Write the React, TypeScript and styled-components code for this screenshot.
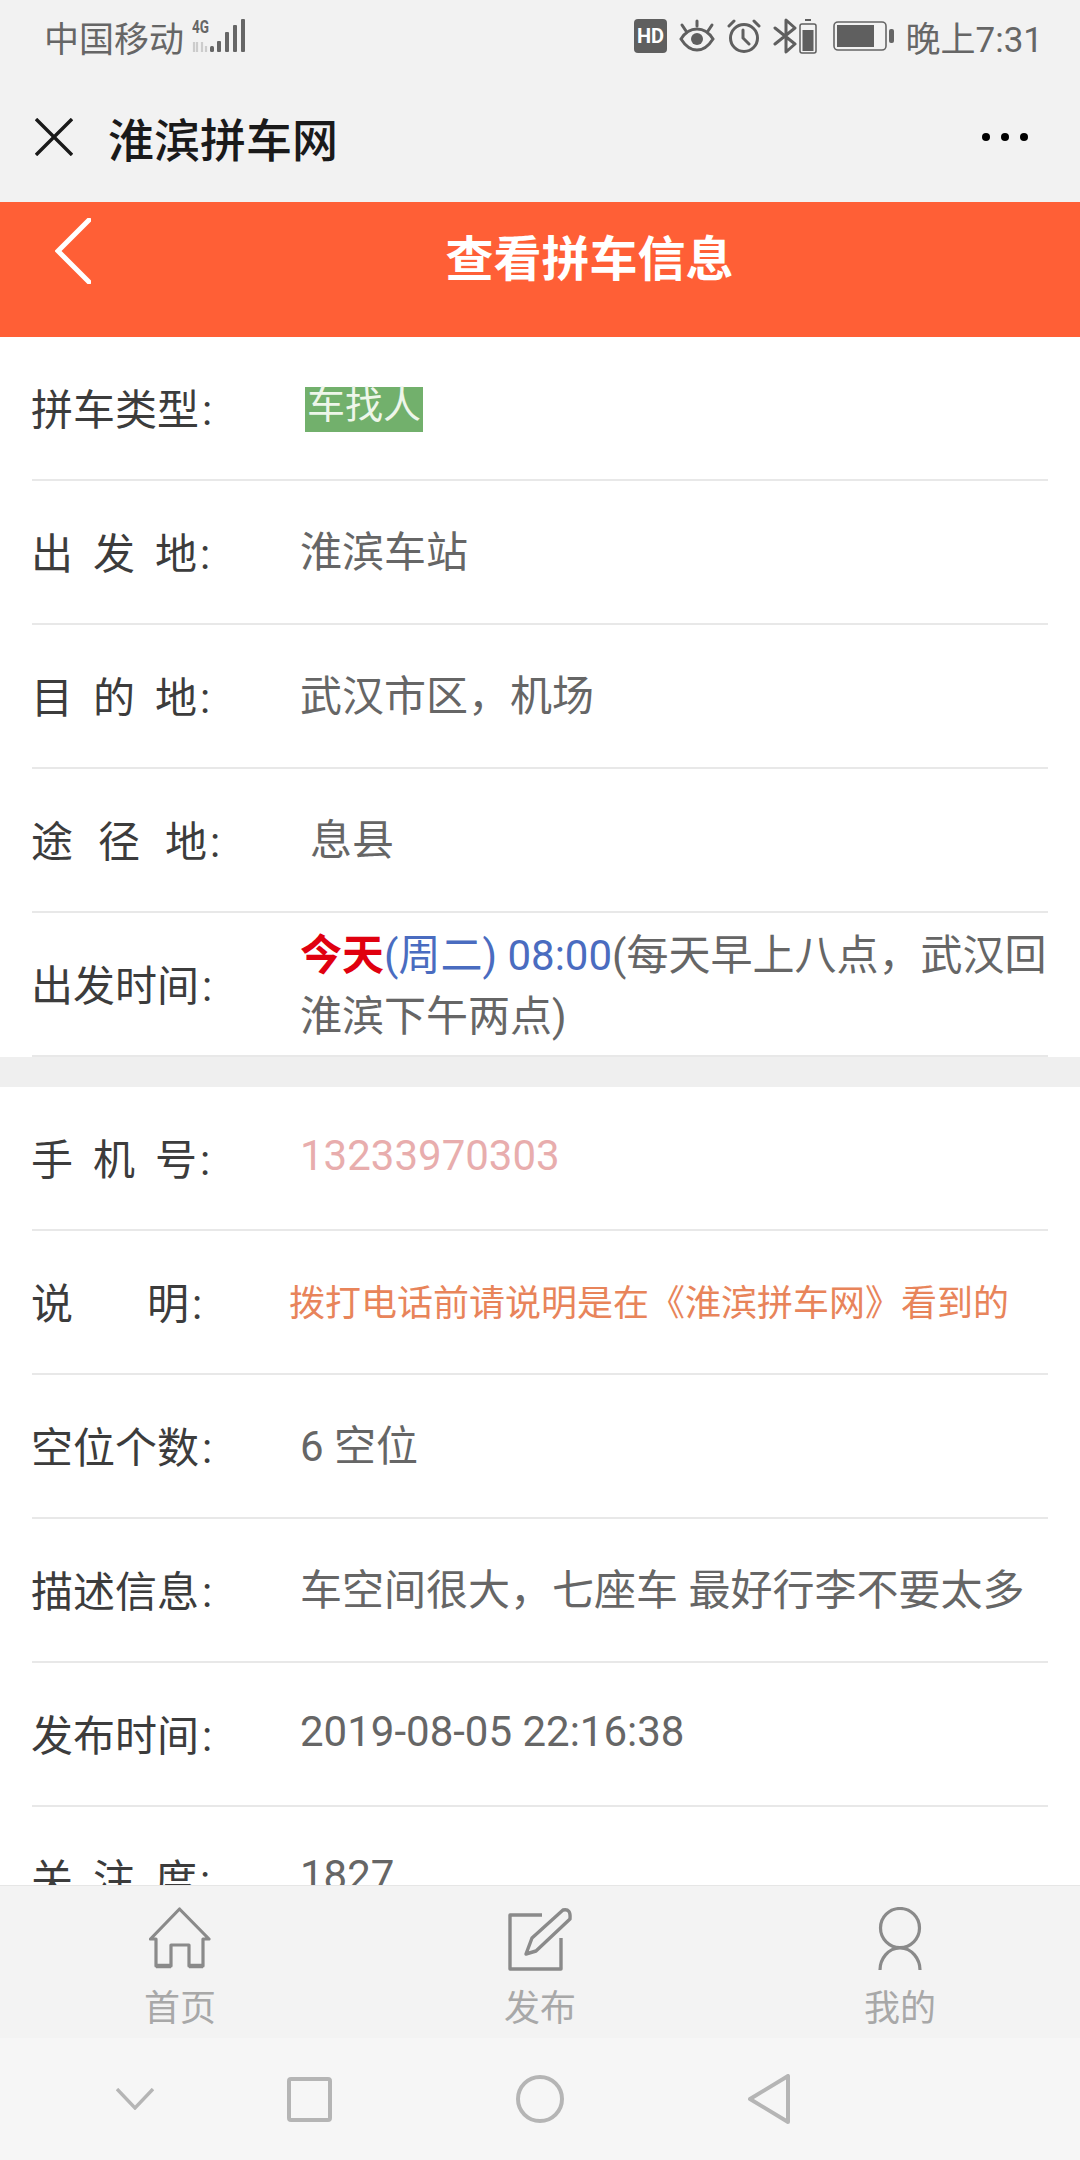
import React from "react";
import styled, { createGlobalStyle } from "styled-components";

const GlobalStyle = createGlobalStyle`
  html, body { margin: 0; padding: 0; background: #fff; }
  * { box-sizing: border-box; }
`;

const Screen = styled.div`
  width: 1080px;
  height: 2160px;
  display: flex;
  flex-direction: column;
  overflow: hidden;
  font-family: Roboto, "Noto Sans CJK SC", sans-serif;
  background: #fff;
`;

const StatusBar = styled.div`
  height: 76px;
  padding: 0 37px 4px 44px;
  display: flex;
  align-items: center;
  justify-content: space-between;
  background: #f2f2f2;
  color: #666;
  font-size: 35px;
  flex: none;
`;

const StatusGroup = styled.div<{ $gap: number }>`
  display: flex;
  align-items: center;
  gap: ${(p) => p.$gap}px;
`;

const TitleBar = styled.div`
  height: 126px;
  padding: 0 52px 4px 35px;
  display: flex;
  align-items: center;
  background: #f2f2f2;
  flex: none;
`;

const TitleText = styled.div`
  flex: 1;
  margin-left: 35px;
  font-size: 46px;
  font-weight: 500;
  color: #1a1a1a;
`;

const Dots = styled.div`
  display: flex;
  gap: 11px;
  span {
    width: 8px;
    height: 8px;
    border-radius: 50%;
    background: #000;
  }
`;

const Header = styled.div`
  height: 135px;
  padding: 16px 0 0 55px;
  display: flex;
  align-items: flex-start;
  background: #ff5f36;
  flex: none;
`;

const HeaderTitle = styled.div`
  flex: 1;
  padding: 14px 0 0 8px;
  text-align: center;
  font-size: 48px;
  line-height: 56px;
  font-weight: 700;
  color: #fff;
`;

const Content = styled.div`
  flex: 1;
  min-height: 0;
  overflow: hidden;
`;

const Row = styled.div`
  height: 144px;
  margin: 0 32px;
  display: flex;
  align-items: center;
  border-bottom: 2px solid #e8e8e8;
  font-size: 42px;
`;

const Label = styled.div`
  width: 269px;
  flex: none;
  margin-left: -1px;
  padding: 0 1px 4px 0;
  color: #3c3c3c;
  white-space: nowrap;
  i {
    font-style: normal;
    margin-left: 3px;
  }
`;

const Spaced = styled.span<{ $pitch: number }>`
  letter-spacing: ${(p) => p.$pitch}px;
`;

const Value = styled.div<{ $indent?: number; $lift?: number; $drop?: number }>`
  flex: 1;
  color: #666;
  margin-left: ${(p) => p.$indent ?? 0}px;
  padding-bottom: ${(p) => p.$lift ?? 0}px;
  padding-top: ${(p) => p.$drop ?? 2}px;
  line-height: 60px;
  white-space: nowrap;
`;

const TwoLines = styled.div`
  line-height: 61px;
`;

const Tag = styled.div`
  width: fit-content;
  height: 45px;
  margin: 3px 0 0 5px;
  padding: 0 2px;
  font-size: 38px;
  line-height: 36px;
  background: #72b06c;
  color: #eef6ea;
`;

const Phone = styled.span`
  color: #e8adad;
`;

const Notice = styled.div`
  margin: 1px 0 0 -11px;
  font-size: 36px;
  color: #e8845a;
  white-space: nowrap;
`;

const Today = styled.b`
  color: #e0000f;
  font-weight: 700;
`;

const Blue = styled.span`
  color: #4a6cc0;
`;

const Gap = styled.div`
  height: 30px;
  background: #efefef;
`;

const TabBar = styled.div`
  height: 153px;
  display: flex;
  flex: none;
  background: #f3f3f3;
  border-top: 1px solid #e6e6e6;
`;

const Tab = styled.div`
  flex: 1;
  padding-top: 21px;
  display: flex;
  flex-direction: column;
  align-items: center;
  color: #a8a8a8;
  font-size: 36px;
  line-height: 40px;
  span {
    margin-top: 18px;
  }
`;

const NavBar = styled.div`
  height: 122px;
  display: grid;
  flex: none;
  grid-template-columns: 171px 229px 232px auto;
  align-items: center;
  padding-left: 116px;
  background: #f6f6f6;
`;

function Signal() {
  return (
    <svg width="54" height="34" viewBox="0 0 54 34">
      <text x="0" y="14" fontSize="19" fontWeight="700" fill="#666" fontFamily="Roboto, sans-serif" textLength="17" lengthAdjust="spacingAndGlyphs">4G</text>
      <path d="M2 33V23M5 33V23M10 33V23M14 33V27" stroke="#ccc" strokeWidth="2.2" fill="none" />
      <g fill="#666">
        <rect x="18" y="27" width="4" height="6" rx="1.5" />
        <rect x="25" y="22" width="4" height="11" rx="1" />
        <rect x="33" y="13" width="4" height="20" rx="1" />
        <rect x="41" y="6" width="4" height="27" rx="1" />
        <rect x="49" y="0" width="4" height="33" rx="1" />
      </g>
    </svg>
  );
}

function StatusIcons() {
  return (
    <>
      <svg width="33" height="34" viewBox="0 0 33 34">
        <rect width="33" height="34" rx="4" fill="#5f5f5f" />
        <text x="16.5" y="24" textAnchor="middle" fontSize="20" fontWeight="700" fill="#fff" fontFamily="Roboto, sans-serif">HD</text>
      </svg>
      <svg width="36" height="34" viewBox="0 0 36 34" fill="none" stroke="#5f5f5f" strokeWidth="3" strokeLinecap="round">
        <path d="M2 20C7 12 12 10 18 10S29 12 34 20C29 28 24 31 18 31S7 28 2 20Z" />
        <circle cx="18" cy="20" r="6" fill="#5f5f5f" stroke="none" />
        <path d="M18 2V7M3 6L7 12M33 6L29 12" />
      </svg>
      <svg width="34" height="34" viewBox="0 0 34 34" fill="none" stroke="#5f5f5f" strokeWidth="3" strokeLinecap="round">
        <circle cx="17" cy="19" r="13.5" />
        <path d="M16 11V19L22 25M2 7L7 2M32 7L27 2" />
      </svg>
      <svg width="44" height="36" viewBox="0 0 44 36" fill="none" stroke="#5f5f5f">
        <path d="M2 10L22 26L13 34V2L22 10L2 26" strokeWidth="3" strokeLinecap="round" strokeLinejoin="round" />
        <rect x="27" y="6" width="16" height="29" rx="2" strokeWidth="1.5" />
        <path d="M32 2H38" strokeWidth="2" />
        <rect x="29.5" y="12" width="11" height="21" fill="#5f5f5f" stroke="none" />
      </svg>
      <svg width="65" height="30" viewBox="-4 0 65 30">
        <rect x="1" y="1" width="52" height="28" rx="4" fill="none" stroke="#666" strokeWidth="1.6" />
        <rect x="4" y="4" width="37" height="22" fill="#5f5f5f" />
        <rect x="56" y="8" width="5" height="14" rx="2" fill="#666" />
      </svg>
    </>
  );
}

function CloseIcon() {
  return (
    <svg width="38" height="38" viewBox="0 0 38 38" fill="none" stroke="#1a1a1a" strokeWidth="3.4">
      <path d="M1 1L37 37M37 1L1 37" />
    </svg>
  );
}

function BackIcon() {
  return (
    <svg width="36" height="66" viewBox="0 0 36 66" fill="none" stroke="#fff" strokeWidth="5" strokeLinecap="round">
      <path d="M34 2L3 33L34 64" />
    </svg>
  );
}

function HomeIcon() {
  return (
    <svg width="62" height="64" viewBox="0 0 62 64" fill="none" stroke="#8a8a8a" strokeWidth="3.2" strokeLinejoin="round">
      <path d="M1.5 32L30.5 2L60 32H54V59H40V38H22V59H7V32Z" />
      <path d="M7 59H22M40 59H54" strokeWidth="4.5" />
    </svg>
  );
}

function EditIcon() {
  return (
    <svg width="66" height="64" viewBox="0 0 66 64" fill="none" stroke="#8a8a8a" strokeWidth="3.4" strokeLinejoin="round">
      <path d="M35 8H3V62H54V31" />
      <path d="M25 31L56 3Q64 1 63 12L29 44L19 47Z" />
    </svg>
  );
}

function UserIcon() {
  return (
    <svg width="44" height="64" viewBox="0 0 44 64" fill="none" stroke="#8a8a8a" strokeWidth="3.2">
      <ellipse cx="22" cy="21" rx="19.5" ry="19.5" />
      <path d="M2 63C2 52 10 41 22 41S42 52 42 63" />
    </svg>
  );
}

function NavIcons() {
  return (
    <>
      <svg width="38" height="22" viewBox="0 0 38 22" fill="none" stroke="#b5b5b5" strokeWidth="3.4">
        <path d="M1 1L19 20L37 1" />
      </svg>
      <svg width="45" height="45" viewBox="0 0 45 45" fill="none" stroke="#b5b5b5" strokeWidth="4">
        <rect x="2" y="2" width="41" height="41" rx="2" />
      </svg>
      <svg width="48" height="48" viewBox="0 0 48 48" fill="none" stroke="#b5b5b5" strokeWidth="4">
        <circle cx="24" cy="24" r="22" />
      </svg>
      <svg width="42" height="50" viewBox="0 0 42 50" fill="none" stroke="#b5b5b5" strokeWidth="4" strokeLinejoin="round">
        <path d="M40 2V48L2 25Z" />
      </svg>
    </>
  );
}

export default function App() {
  return (
    <Screen>
      <GlobalStyle />
      <StatusBar>
        <StatusGroup $gap={8}>
          中国移动
          <Signal />
        </StatusGroup>
        <StatusGroup $gap={12}>
          <StatusIcons />
          <span>晚上7:31</span>
        </StatusGroup>
      </StatusBar>
      <TitleBar>
        <CloseIcon />
        <TitleText>淮滨拼车网</TitleText>
        <Dots>
          <span />
          <span />
          <span />
        </Dots>
      </TitleBar>
      <Header>
        <BackIcon />
        <HeaderTitle>查看拼车信息</HeaderTitle>
      </Header>
      <Content>
        <Row>
          <Label>拼车类型<i>:</i></Label>
          <Value $drop={0}><Tag>车找人</Tag></Value>
        </Row>
        <Row>
          <Label><Spaced $pitch={20}>出发</Spaced>地<i>:</i></Label>
          <Value>淮滨车站</Value>
        </Row>
        <Row>
          <Label><Spaced $pitch={20}>目的</Spaced>地<i>:</i></Label>
          <Value>武汉市区，机场</Value>
        </Row>
        <Row>
          <Label><Spaced $pitch={25}>途径</Spaced>地<i>:</i></Label>
          <Value $indent={10}>息县</Value>
        </Row>
        <Row>
          <Label>出发时间<i>:</i></Label>
          <Value $drop={4}>
            <TwoLines>
              <Today>今天</Today>
              <Blue>(周二) 08:00</Blue>(每天早上八点，武汉回
              <br />
              淮滨下午两点)
            </TwoLines>
          </Value>
        </Row>
        <Gap />
        <Row>
          <Label><Spaced $pitch={20}>手机</Spaced>号<i>:</i></Label>
          <Value $drop={0} $lift={4}><Phone>13233970303</Phone></Value>
        </Row>
        <Row>
          <Label><Spaced $pitch={74}>说</Spaced>明<i>:</i></Label>
          <Value><Notice>拨打电话前请说明是在《淮滨拼车网》看到的</Notice></Value>
        </Row>
        <Row>
          <Label>空位个数<i>:</i></Label>
          <Value>6 空位</Value>
        </Row>
        <Row>
          <Label>描述信息<i>:</i></Label>
          <Value>车空间很大，七座车 最好行李不要太多</Value>
        </Row>
        <Row>
          <Label>发布时间<i>:</i></Label>
          <Value $drop={0} $lift={4}>2019-08-05 22:16:38</Value>
        </Row>
        <Row>
          <Label><Spaced $pitch={20}>关注</Spaced>度<i>:</i></Label>
          <Value $drop={0} $lift={4}>1827</Value>
        </Row>
      </Content>
      <TabBar>
        <Tab><HomeIcon /><span>首页</span></Tab>
        <Tab><EditIcon /><span>发布</span></Tab>
        <Tab><UserIcon /><span>我的</span></Tab>
      </TabBar>
      <NavBar>
        <NavIcons />
      </NavBar>
    </Screen>
  );
}
